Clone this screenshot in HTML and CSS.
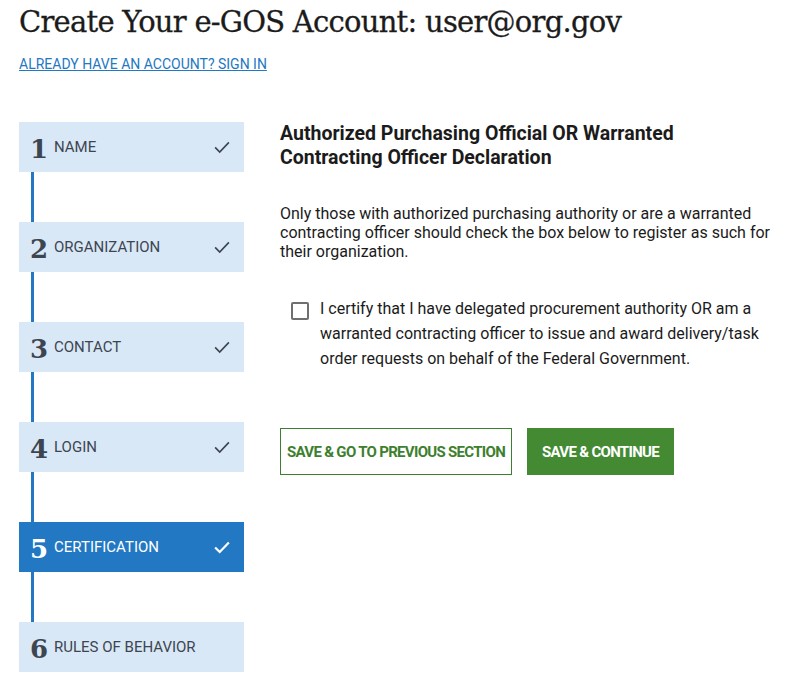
FILE: index.html
```html
<!DOCTYPE html>
<html lang="en">
<head>
<meta charset="utf-8">
<title>Create Your e-GOS Account</title>
<link rel="stylesheet" href="styles.css">
</head>
<body>
<div class="page">
  <h1 class="title">Create Your e-GOS Account: user@org.gov</h1>
  <a class="signin" href="#">ALREADY HAVE AN ACCOUNT? SIGN IN</a>
  <div class="layout">
    <nav class="steps">
      <div class="step done"><span class="num">1</span><span class="label">NAME</span><svg class="check" viewBox="0 0 24 24"><path d="M4.5 12.5l5 5L19.5 7"/></svg></div>
      <div class="connector"></div>
      <div class="step done"><span class="num">2</span><span class="label">ORGANIZATION</span><svg class="check" viewBox="0 0 24 24"><path d="M4.5 12.5l5 5L19.5 7"/></svg></div>
      <div class="connector"></div>
      <div class="step done"><span class="num">3</span><span class="label">CONTACT</span><svg class="check" viewBox="0 0 24 24"><path d="M4.5 12.5l5 5L19.5 7"/></svg></div>
      <div class="connector"></div>
      <div class="step done"><span class="num">4</span><span class="label">LOGIN</span><svg class="check" viewBox="0 0 24 24"><path d="M4.5 12.5l5 5L19.5 7"/></svg></div>
      <div class="connector"></div>
      <div class="step active"><span class="num">5</span><span class="label">CERTIFICATION</span><svg class="check" viewBox="0 0 24 24"><path d="M4.5 12.5l5 5L19.5 7"/></svg></div>
      <div class="connector"></div>
      <div class="step"><span class="num">6</span><span class="label">RULES OF BEHAVIOR</span></div>
    </nav>
    <main class="content">
      <h2 class="heading">Authorized Purchasing Official OR Warranted Contracting Officer Declaration</h2>
      <p class="intro">Only those with authorized purchasing authority or are a warranted contracting officer should check the box below to register as such for their organization.</p>
      <label class="certify">
        <span class="box"></span>
        <span class="certify-text">I certify that I have delegated procurement authority OR am a warranted contracting officer to issue and award delivery/task order requests on behalf of the Federal Government.</span>
      </label>
      <div class="actions">
        <button class="btn btn-outline">SAVE &amp; GO TO PREVIOUS SECTION</button>
        <button class="btn btn-solid">SAVE &amp; CONTINUE</button>
      </div>
    </main>
  </div>
</div>
</body>
</html>
```
FILE: styles.css
```css
html, body {
  margin: 0;
  padding: 0;
  background: #ffffff;
}
body {
  font-family: Roboto, "Liberation Sans", sans-serif;
  color: #1b1b1b;
}
.page {
  padding: 0 19px;
}
.title {
  margin: 0;
  padding-top: 2px;
  font-family: "DejaVu Serif", "Liberation Serif", serif;
  font-weight: normal;
  font-size: 29px;
  line-height: 40px;
  color: #1b1b1b;
  letter-spacing: -0.75px;
  -webkit-text-stroke: 0.3px #1b1b1b;
}
.signin {
  display: inline-block;
  margin-top: 14px;
  font-size: 14px;
  line-height: 16px;
  color: #2378c3;
  text-decoration: underline;
}
.layout {
  display: flex;
  gap: 36px;
  margin-top: 49px;
}
.steps {
  width: 225px;
  flex: none;
  display: flex;
  flex-direction: column;
}
.step {
  height: 50px;
  background: #d9e8f6;
  display: flex;
  align-items: center;
  padding: 0 11px 0 11px;
  color: #3d4551;
}
.step .num {
  font-family: "DejaVu Serif", serif;
  font-weight: bold;
  font-size: 26px;
  width: 20px;
  margin-top: 4px;
}
.step .label {
  flex: 1;
  margin-left: 4px;
  font-size: 15px;
}
.step .check {
  width: 22px;
  height: 22px;
  fill: none;
  stroke: #3d4551;
  stroke-width: 1.8;
}
.step.active {
  background: #2378c3;
  color: #ffffff;
}
.step.active .check {
  stroke: #ffffff;
  stroke-width: 2.4;
}
.connector {
  height: 50px;
  width: 3px;
  margin-left: 12px;
  background: #2378c3;
}
.content {
  flex: 1;
  padding-right: 8px;
}
.heading {
  margin: 0;
  max-width: 470px;
  font-size: 19.5px;
  line-height: 24px;
  font-weight: bold;
  color: #1b1b1b;
}
.intro {
  margin: 34px 0 0 0;
  font-size: 16px;
  line-height: 19px;
}
.certify {
  display: flex;
  margin-top: 35px;
  padding-left: 11px;
  gap: 11px;
  max-width: 470px;
}
.box {
  flex: none;
  width: 14px;
  height: 14px;
  border: 2px solid #6f6f6f;
  border-radius: 2px;
  margin-top: 6px;
}
.certify-text {
  font-size: 16px;
  line-height: 25px;
  color: #1b1b1b;
}
.actions {
  display: flex;
  gap: 15px;
  margin-top: 57px;
}
.btn {
  height: 47px;
  font-family: Roboto, "Liberation Sans", sans-serif;
  font-weight: bold;
  font-size: 15px;
  letter-spacing: -0.7px;
  padding: 0 5px;
  cursor: pointer;
}
.btn-outline {
  background: #ffffff;
  color: #3d7f2e;
  border: 1px solid #3d7f2e;
  width: 232px;
}
.btn-solid {
  background: #438a33;
  color: #ffffff;
  border: none;
  width: 147px;
}
```
